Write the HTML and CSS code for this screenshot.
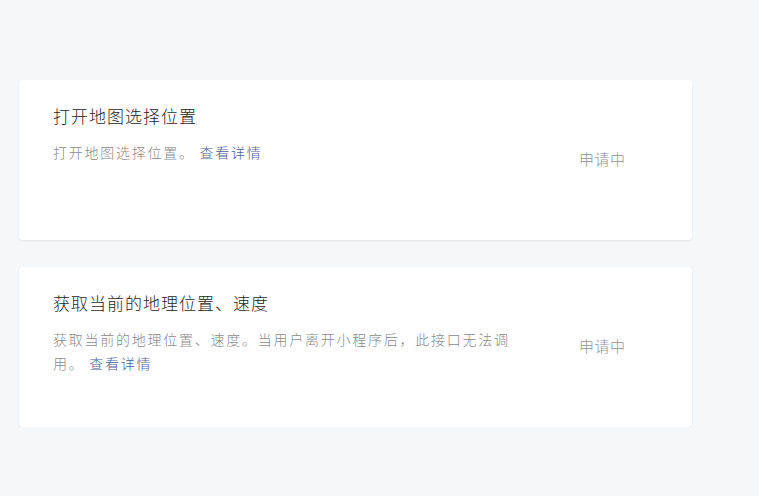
FILE: index.html
```html
<!DOCTYPE html>
<html lang="zh-CN">
<head>
<meta charset="utf-8">
<title>接口权限</title>
<link rel="stylesheet" href="styles.css">
</head>
<body>
<div class="list">
  <div class="card">
    <div class="info">
      <div class="title">打开地图选择位置</div>
      <p class="desc">打开地图选择位置。 <a class="link" href="#">查看详情</a></p>
    </div>
    <div class="status">申请中</div>
  </div>
  <div class="card">
    <div class="info">
      <div class="title">获取当前的地理位置、速度</div>
      <p class="desc">获取当前的地理位置、速度。当用户离开小程序后，此接口无法调用。 <a class="link" href="#">查看详情</a></p>
    </div>
    <div class="status">申请中</div>
  </div>
</div>
</body>
</html>
```
FILE: styles.css
```css
html, body {
  margin: 0;
  padding: 0;
  background: #f6f7f9;
  font-family: "Noto Sans CJK SC", "Noto Sans", sans-serif;
}
.list {
  display: flex;
  flex-direction: column;
  gap: 27px;
  padding: 80px 0 0 19px;
  width: 673px;
}
.card {
  display: flex;
  align-items: center;
  height: 160px;
  box-sizing: border-box;
  background: #fff;
  border-radius: 4px;
  box-shadow: 0 1px 2px rgba(0, 0, 0, 0.08);
  padding: 0 0 0 34px;
}
.info {
  align-self: flex-start;
  padding-top: 24px;
  width: 470px;
}
.title {
  font-size: 17px;
  font-weight: 300;
  letter-spacing: 1px;
  line-height: 24px;
  color: #1f1f1f;
}
.desc {
  margin: 12px 0 0;
  font-size: 14px;
  font-weight: 300;
  letter-spacing: 1.75px;
  line-height: 24px;
  color: #8a8a8a;
}
.link {
  color: #4a6093;
  text-decoration: none;
}
.status {
  margin: 0 0 4px 56px;
  font-size: 15px;
  font-weight: 300;
  letter-spacing: 0.5px;
  color: #939393;
}
```
